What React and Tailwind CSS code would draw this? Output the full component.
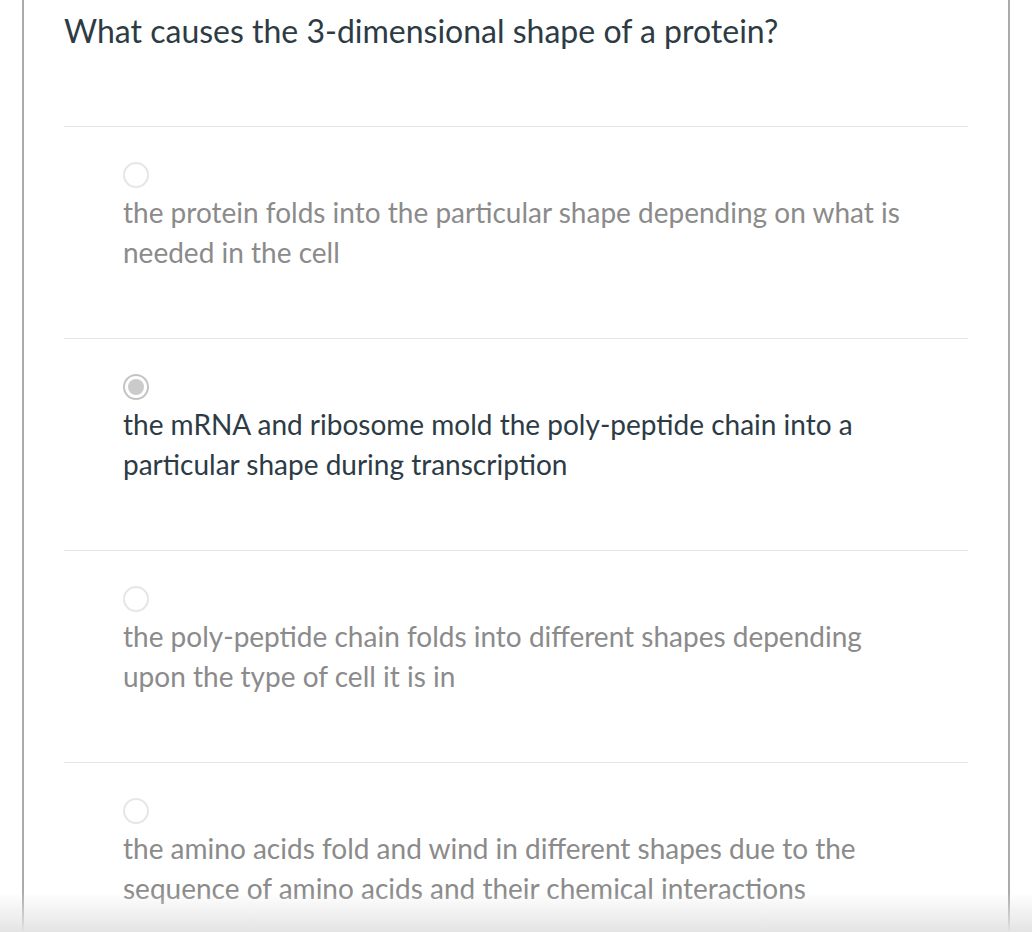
import React from "react";

const options = [
  {
    text: "the protein folds into the particular shape depending on what is needed in the cell",
    selected: false,
  },
  {
    text: "the mRNA and ribosome mold the poly-peptide chain into a particular shape during transcription",
    selected: true,
  },
  {
    text: "the poly-peptide chain folds into different shapes depending upon the type of cell it is in",
    selected: false,
  },
  {
    text: "the amino acids fold and wind in different shapes due to the sequence of amino acids and their chemical interactions",
    selected: false,
  },
];

function Radio({ selected }) {
  return (
    <div
      className={`flex h-[26px] w-[26px] items-center justify-center rounded-full border-2 ${
        selected ? "border-[#c4c4c4] bg-white" : "border-[#e6e6e6] bg-white"
      }`}
    >
      {selected && <div className="h-[16px] w-[16px] rounded-full bg-[#cbcbcb]" />}
    </div>
  );
}

export default function App() {
  return (
    <div
      className="relative h-[932px] overflow-hidden bg-white"
      style={{ fontFamily: "Lato, 'Open Sans', sans-serif" }}
    >
      <div className="ml-[22px] mr-[22px] min-h-[932px] border-x-2 border-[#ababab] px-[40px]">
        <h1 className="pt-[8px] text-[32px] leading-[45px] text-[#2d3b45]">
          What causes the 3-dimensional shape of a protein?
        </h1>
        <div className="mt-[73px]">
          {options.map((option, idx) => (
            <div key={idx} className="h-[212px] border-t border-[#e6e6e6] pl-[59px] pt-[35px]">
              <Radio selected={option.selected} />
              <p
                className={`mt-[4px] max-w-[790px] text-[28px] leading-[40px] ${
                  option.selected ? "text-[#2d3b45]" : "text-[#8b8b8b]"
                }`}
              >
                {option.text}
              </p>
            </div>
          ))}
        </div>
      </div>
      <div className="pointer-events-none absolute bottom-0 left-0 right-0 h-[40px] bg-gradient-to-b from-white/0 to-[#e4e4e4]" />
    </div>
  );
}
